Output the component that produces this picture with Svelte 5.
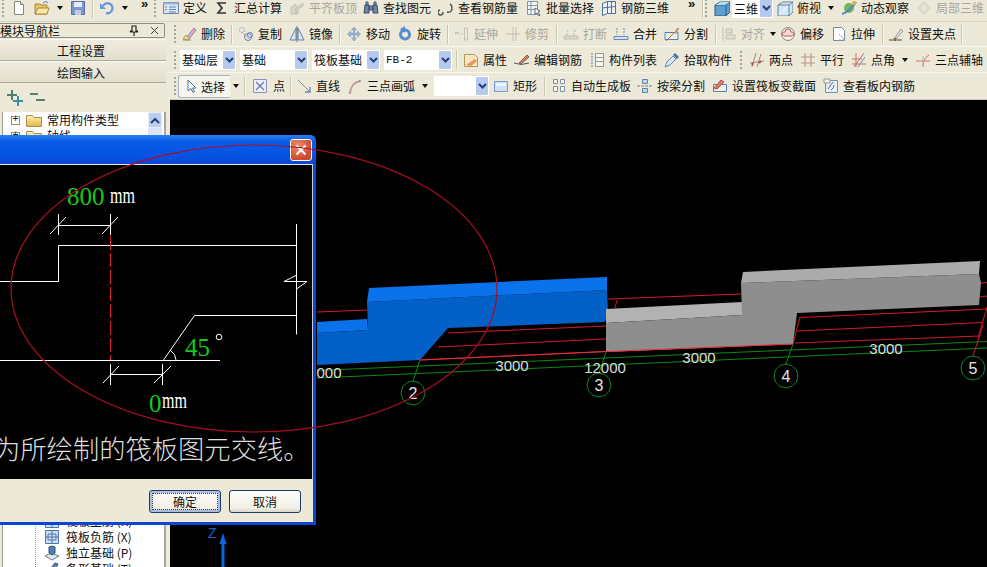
<script>
	const icons = {
		new: '<path d="M3.5 1.5h6l3 3v10h-9z" fill="#fff" stroke="#85857a"/><path d="M9.5 1.5v3h3" fill="#e4e4dc" stroke="#85857a"/>',
		open: '<path d="M1 4h5l1 1h6v9H1z" fill="#e9c665" stroke="#a5863a"/><path d="M1 14l3-6h11l-2 6z" fill="#fbe7a3" stroke="#a5863a"/><path d="M9 3q3-3 5 0" stroke="#4d86d2" fill="none"/>',
		save: '<path d="M1.5 1.5h13v13h-13z" fill="#7c97d0" stroke="#5570aa"/><path d="M4 2h8v5H4z" fill="#e8ecf6"/><path d="M5 10h6v5H5z" fill="#c3ccdb"/>',
		undo: '<path d="M4 6a5 5 0 1 1 3 7" fill="none" stroke="#6a97d8" stroke-width="2.4"/><path d="M1 3v6h6z" fill="#6a97d8"/>',
		define: '<path d="M.5 2.5h15v11H.5z" fill="#dbe6f6" stroke="#6a86ad"/><path d="M.5 2.5h15v2H.5z" fill="#9ab4da"/><path d="M6 7h7M6 9.500h7M6 12h7M2 7h2M2 9.500h2" stroke="#6a86ad"/>',
		sigma: '<path d="M12 3H4l4 5-4 5h8" fill="none" stroke="#333" stroke-width="1.700"/>',
		flush: '<path d="M2 14V7l5-3v10zM7 8l7-5v3l-5 3v5H7z" fill="#d2d0c4" stroke="#b5b3a7"/>',
		find: '<path d="M2 5h4v8H1zM10 5h4l1 8h-5zM6 6h4v4H6z" fill="#6f86a6" stroke="#3c4e6c"/><path d="M3 2h2v3H3zM11 2h2v3h-2z" fill="#9db1ce" stroke="#3c4e6c"/>',
		rebar: '<path d="M2 10a2.500 2.500 0 1 0 3 2M9 12q5 1 5-4 0-3-2-4" fill="none" stroke="#555" stroke-width="1.500"/>',
		batch: '<path d="M1.500 1.500h10v13h-10zM1.500 5.500h10M1.500 9.500h10M5 1.500v13" fill="#f6f6f0" stroke="#7f94b4"/><path d="M9 8l5 3-2 1 2 3-1 1-2-3-2 1z" fill="#fff" stroke="#666"/>',
		grid3d: '<path d="M1.500 3.500l5-2v12l-5 2zM6.500 1.500h8v12h-8zM10.500 1.500v12M1.500 8l13-1.500" fill="#eef2f9" stroke="#4f6f9f"/>',
		cube: '<path d="M1 5l5-3h10v10l-4 4H1z" fill="#5f9fd0" stroke="#2a5a84"/><path d="M1 5h11v11M12 5l4-3" fill="none" stroke="#2a5a84"/><path d="M1.500 5l5-3h9l-4 3z" fill="#b2dcf0"/>',
		cubeTop: '<path d="M1 5l5-3h10v10l-4 4H1z" fill="#d4e6f2" stroke="#5c84a2"/><path d="M1 5h11v11M12 5l4-3" fill="none" stroke="#5c84a2"/><path d="M2 15l9-9" stroke="#fff"/>',
		orbit: '<circle cx="8" cy="8" r="5" fill="#77b25e"/><path d="M1 14C5 13 12 7 15 2" fill="none" stroke="#4d8cb8" stroke-width="2"/><circle cx="13" cy="3" r="2" fill="#e8b040"/>',
		local: '<path d="M8 1l7 7-7 7-7-7z" fill="#d4d2c6"/><circle cx="8" cy="8" r="3" fill="#e9e6d8"/>',
		erase: '<path d="M2 14h8" stroke="#888"/><path d="M5 12L13 2l2 2-7 9z" fill="#d3b0cc" stroke="#9a80a0"/><path d="M2 13l3-4 3 3-1 2z" fill="#ecd98c" stroke="#a89a50"/>',
		copy: '<circle cx="4" cy="4" r="2.500" fill="none" stroke="#8ea2c0" stroke-dasharray="2 1"/><path d="M5 7l6 6" stroke="#bbb"/><circle cx="10" cy="11" r="3.500" fill="none" stroke="#6384ba"/><circle cx="12" cy="9" r="2.500" fill="none" stroke="#6384ba"/>',
		mirror: '<path d="M7 2L1 14h6zM9 2l6 12H9z" fill="#dde6f3" stroke="#6280ae"/><path d="M8 0v16" stroke="#666"/>',
		move: '<path d="M8 1l2.500 3h-2v3h3v-2L14.500 8l-3 3V9h-3v3h2L8 15l-2.500-3h2V9h-3v2L1.500 8l3-3v2h3V4h-2z" fill="#9db3d2" stroke="#7590b6" stroke-width=".5"/>',
		rotate: '<circle cx="8" cy="8.500" r="4.500" fill="none" stroke="#5a8ad2" stroke-width="3"/><path d="M8 0v7L3 3z" fill="#5a8ad2"/>',
		extend: '<path d="M1 8h8" stroke="#b5b3a8" stroke-dasharray="2 1"/><path d="M1 6.500h4M10.500 2h3v12h-3z" fill="none" stroke="#b5b3a8"/>',
		trim: '<path d="M1 8h14M8 1v14M11 1v14" stroke="#b5b3a8" fill="none"/>',
		break: '<path d="M1 13h14v-3H1zM4 10V7M11 10V7M4 4l1 2M11 3l1 3" fill="#d5d3c7" stroke="#b5b3a8"/>',
		merge: '<path d="M1 13.500h14v-3H1z" fill="#d4e2f4" stroke="#6a8bb8"/><path d="M4 2v7M11 2v7" stroke="#6a8bb8" stroke-dasharray="2 1"/>',
		split: '<path d="M1 6.500h13v7H1z" fill="#f4f0d8" stroke="#4a80d0"/><path d="M2 15L15 2" stroke="#c8604c"/><path d="M10 7l3-5 2 1-3 5z" fill="#b09a7c"/>',
		align: '<path d="M2 1v14M5 3h6v4H5zM5 9h9v4H5z" fill="#dddbd0" stroke="#b5b3a8"/>',
		offset: '<circle cx="8" cy="8" r="6.500" fill="#f4f1e6" stroke="#888"/><path d="M4 10a2 2 0 0 1 1-4 3 3 0 0 1 6 0 2 2 0 0 1 1 4z" fill="#f5d8d0" stroke="#b8645e"/>',
		stretch: '<path d="M2.500 1.500h8l3 3v10h-11z" fill="#fff" stroke="#748caa"/><path d="M8 8l6 6M8 14h6" stroke="#999" stroke-dasharray="2 1"/>',
		grips: '<path d="M1 14h4M9 14h5" stroke="#444"/><path d="M6 13L13 3l2 2-7 8z" fill="#e2e2e2" stroke="#999"/><rect x="5.500" y="12" width="3" height="3" fill="#8a6a30"/>',
		props: '<path d="M1.500 2.500h10l3 3v9h-13z" fill="#f7e7b8" stroke="#b09862"/><path d="M3 13l9-6 2 2-6 5z" fill="#ea9068"/>',
		edit: '<path d="M0 11q7 3 15 0" fill="none" stroke="#555"/><path d="M5 11l8-8 2 2-8 7z" fill="#d08060" stroke="#8a5a4a"/>',
		list: '<path d="M2 2h2M2 5h2M2 8h2M2 11h2M2 14h2" stroke="#8ba5ca" stroke-width="1.500"/><path d="M6.500 1.500h8v13h-8zM6.500 5.500h8M6.500 9.500h8" fill="#f6f6ef" stroke="#999"/>',
		pick: '<path d="M1 15l2-5 6-6 3 3-6 6z" fill="#d8e9f7" stroke="#5f8ab4"/><path d="M9 3l2-2 4 4-2 2z" fill="#4373ac"/>',
		twoPt: '<path d="M1 11l14-2M7 1l-4 14M12 2l-4 13" stroke="#9a8a7a"/><path d="M3 13l1-2M10 11l2-2" stroke="#c84040" stroke-width="2"/>',
		parallel: '<path d="M1 5h14M1 11h14M5 1v14M11 1v14" stroke="#b8908a"/>',
		angle: '<path d="M1 12h14M1 7h10M5 1v14M13 1L3 15" stroke="#c87070"/><path d="M7 15L14 5" stroke="#7a8aa8"/>',
		three: '<path d="M1 9h14M8 15q0-9 6-12" fill="none" stroke="#d87060"/><path d="M8 4v11" stroke="#a6bad0"/>',
		cursor: '<path d="M4 2v11l3-2.500 2 4 1.500-.8-2-3.700h3.500z" fill="#fff" stroke="#50709f"/>',
		point: '<path d="M1.500 1.500h13v13h-13z" fill="#eceff8" stroke="#8a90c0"/><path d="M4 4l8 8M12 4l-8 8" stroke="#7076b0" stroke-width="1.300"/>',
		line: '<path d="M2 2l12 12" stroke="#888"/><path d="M9 14h5V9" fill="none" stroke="#6080b4" stroke-width="1.300"/>',
		arc: '<path d="M3 15Q4 5 13 3" fill="none" stroke="#c4a0a0" stroke-width="2"/><path d="M2 15h2M12 3h2" stroke="#777"/>',
		rect: '<path d="M1.500 3.500h13v10h-13z" fill="#cfe0f6" stroke="#7a9aca"/><path d="M3 5h10v3H3z" fill="#eaf2fc"/>',
		auto: '<path d="M2.500 1.500h4v4h-4zM9.500 1.500h4v4h-4zM2.500 8.500h4v5h-4zM9.500 8.500h4v5h-4z" fill="#f6f6ee" stroke="#7f90a8"/>',
		beam: '<path d="M5.500 1.500h5v4h-5zM5.500 10.500h5v4h-5z" fill="#c6d8f0" stroke="#5f82b6"/><path d="M0 8h16" stroke="#5f82b6" stroke-dasharray="3 1"/>',
		section: '<path d="M1.500 6.500h13v7h-13z" fill="#f6f2e0" stroke="#4a80cc"/><path d="M2 10l7-8 3 2-7 7z" fill="#e07a6a" stroke="#b05044"/>',
		view: '<path d="M2.500 2.500h12v12h-12z" fill="#e4edf8" stroke="#7590b6"/><path d="M1 1h6v4H1z" fill="#f4f4e8" stroke="#999"/><path d="M5 11l5-7M8 12q3-2 3-5" fill="none" stroke="#668"/>',
		plus: '<path d="M4 0h2v4h4v2H6v4H4V6H0V4h4z" fill="#4e7f6c"/><path d="M10 6h2v4h4v2h-4v4h-2v-4H6v-2h4z" fill="#3c8f9c"/>',
		minus: '<path d="M0 3h8v2H0zM6 9h9v2H6z" fill="#5e7f70"/>',
		folder: '<path d="M.5 3.500h6l1.500 2h7.500v9H.5z" fill="url(#fold)" stroke="#a98d4f"/>',
		slab: '<path d="M1.500 1.500h13v13h-13zM1.500 8h13M8 1.500v13M4 5h8v6H4z" fill="#cfe0f6" stroke="#4f73ad"/>',
		foot: '<path d="M1 11l6-3 8 3-7 4z" fill="#e2e8ee" stroke="#6a7a8a"/><path d="M5 8V2l3-1 3 1v6l-3 2z" fill="#4d7fb5" stroke="#2e5686"/>',
		strip: '<path d="M2 13l9-11 3 1-6 12z" fill="#5d7fa8" stroke="#2e5686"/>'
	};

	// x is the left edge in the window, the cell width comes from the next item
	function lay(items, end) {
		return items.map((it, i) => ({
			...it,
			w: (i + 1 < items.length ? items[i + 1].x : end) - it.x
		}));
	}

	const row1 = lay([
		{ k: "grip", x: 2 },
		{ k: "icon", i: "new", x: 11 },
		{ k: "icon", i: "open", x: 34 },
		{ k: "arrow", x: 56 },
		{ k: "icon", i: "save", x: 70 },
		{ k: "sep", x: 92 },
		{ k: "icon", i: "undo", x: 99 },
		{ k: "arrow", x: 121 },
		{ k: "more", x: 138 },
		{ k: "grip", x: 154 },
		{ k: "btn", i: "define", t: "定义", x: 163 },
		{ k: "btn", i: "sigma", t: "汇总计算", x: 214 },
		{ k: "btn", i: "flush", t: "平齐板顶", x: 289, off: true },
		{ k: "btn", i: "find", t: "查找图元", x: 363 },
		{ k: "btn", i: "rebar", t: "查看钢筋量", x: 438 },
		{ k: "btn", i: "batch", t: "批量选择", x: 526 },
		{ k: "btn", i: "grid3d", t: "钢筋三维", x: 601 },
		{ k: "more", x: 685 },
		{ k: "sep", x: 702 },
		{ k: "grip", x: 705 },
		{ k: "icon", i: "cube", x: 714 },
		{ k: "combo", t: "三维", x: 732, plain: true },
		{ k: "btn", i: "cubeTop", t: "俯视", x: 777 },
		{ k: "arrow", x: 827 },
		{ k: "btn", i: "orbit", t: "动态观察", x: 841 },
		{ k: "btn", i: "local", t: "局部三维", x: 916, off: true }
	], 987);

	const row2 = lay([
		{ k: "grip", x: 174 },
		{ k: "btn", i: "erase", t: "删除", x: 181 },
		{ k: "sep", x: 231 },
		{ k: "btn", i: "copy", t: "复制", x: 238 },
		{ k: "btn", i: "mirror", t: "镜像", x: 289 },
		{ k: "sep", x: 339 },
		{ k: "btn", i: "move", t: "移动", x: 346 },
		{ k: "btn", i: "rotate", t: "旋转", x: 397 },
		{ k: "sep", x: 447 },
		{ k: "btn", i: "extend", t: "延伸", x: 454, off: true },
		{ k: "btn", i: "trim", t: "修剪", x: 505, off: true },
		{ k: "sep", x: 556 },
		{ k: "btn", i: "break", t: "打断", x: 563, off: true },
		{ k: "btn", i: "merge", t: "合并", x: 613 },
		{ k: "btn", i: "split", t: "分割", x: 664 },
		{ k: "sep", x: 715 },
		{ k: "btn", i: "align", t: "对齐", x: 721, off: true },
		{ k: "arrow", x: 769 },
		{ k: "btn", i: "offset", t: "偏移", x: 780 },
		{ k: "btn", i: "stretch", t: "拉伸", x: 831 },
		{ k: "sep", x: 882 },
		{ k: "btn", i: "grips", t: "设置夹点", x: 888 },
		{ k: "sep", x: 961 }
	], 987);

	const row3 = lay([
		{ k: "grip", x: 174 },
		{ k: "combo", t: "基础层", x: 180 },
		{ k: "combo", t: "基础", x: 240 },
		{ k: "combo", t: "筏板基础", x: 312 },
		{ k: "combo", t: "FB-2", x: 384, mono: true },
		{ k: "sep", x: 456 },
		{ k: "btn", i: "props", t: "属性", x: 463 },
		{ k: "btn", i: "edit", t: "编辑钢筋", x: 514 },
		{ k: "btn", i: "list", t: "构件列表", x: 589 },
		{ k: "btn", i: "pick", t: "拾取构件", x: 664 },
		{ k: "grip", x: 740 },
		{ k: "btn", i: "twoPt", t: "两点", x: 749 },
		{ k: "btn", i: "parallel", t: "平行", x: 800 },
		{ k: "btn", i: "angle", t: "点角", x: 851 },
		{ k: "arrow", x: 901 },
		{ k: "btn", i: "three", t: "三点辅轴", x: 915 }
	], 987);

	const row4 = lay([
		{ k: "grip", x: 174 },
		{ k: "select", i: "cursor", t: "选择", x: 178 },
		{ k: "arrow", x: 232 },
		{ k: "sep", x: 244 },
		{ k: "btn", i: "point", t: "点", x: 252, wide: true },
		{ k: "sep", x: 290 },
		{ k: "btn", i: "line", t: "直线", x: 296 },
		{ k: "btn", i: "arc", t: "三点画弧", x: 347 },
		{ k: "arrow", x: 421 },
		{ k: "combo", t: "", x: 434 },
		{ k: "btn", i: "rect", t: "矩形", x: 493 },
		{ k: "sep", x: 544 },
		{ k: "btn", i: "auto", t: "自动生成板", x: 551 },
		{ k: "btn", i: "beam", t: "按梁分割", x: 637 },
		{ k: "btn", i: "section", t: "设置筏板变截面", x: 712 },
		{ k: "btn", i: "view", t: "查看板内钢筋", x: 823 }
	], 987);

	const axes = [
		{ n: 2, x: 413, y: 393, to: [420, 360] },
		{ n: 3, x: 599, y: 385, to: [606, 352] },
		{ n: 4, x: 786, y: 376, to: [793, 344] },
		{ n: 5, x: 973, y: 368, to: [983, 325] }
	];

	const redLines = [
		"317,312 367,310", "608,299 741,294", "980,283 987,282.500", "980,297 987,296",
		"448,333 606,326", "438,347 606,339", "420,360 606,351.500", "606,351.500 793,344",
		"800,317.500 987,309", "797,331 983,322.500", "795,343 980,336", "987,307 978,338",
		"800,317 793,344", "617,300 615,308"
	];

	const dims = [
		{ t: "000", x: 329, y: 378 },
		{ t: "3000", x: 512, y: 371 },
		{ t: "12000", x: 605, y: 373 },
		{ t: "3000", x: 699, y: 363 },
		{ t: "3000", x: 886, y: 354 }
	];

	// octagon-ish bubble round the axis number
	function ring(cx, cy, r) {
		let pts = [];
		for (let a = 0; a < 12; a++) {
			let t = (a / 12) * Math.PI * 2;
			pts.push((cx + r * Math.cos(t)).toFixed(1) + "," + (cy + r * Math.sin(t)).toFixed(1));
		}
		return pts.join(" ");
	}
</script>

{#snippet icon(name)}
	<svg class="ico" viewBox="0 0 16 16" width="16" height="16">{@html icons[name]}</svg>
{/snippet}

{#snippet toolbar(items)}
	{#each items as it}
		<div class="cell" class:off={it.off} style:width={it.w + "px"}>
			{#if it.k === "grip"}
				<span class="grip"></span>
			{:else if it.k === "sep"}
				<span class="sep"></span>
			{:else if it.k === "more"}
				<span class="more">»</span>
			{:else if it.k === "arrow"}
				<span class="arrow"></span>
			{:else if it.k === "icon"}
				{@render icon(it.i)}
			{:else if it.k === "select"}
				<span class="select">{@render icon(it.i)}<span>{it.t}</span></span>
			{:else if it.k === "combo"}
				<span class="combo" class:mono={it.mono}>
					<span class="val">{it.t}</span>
					<span class="drop"><svg viewBox="0 0 9 6" width="9" height="6"><path d="M1 1l3.500 3.500L8 1" fill="none" stroke="#24407c" stroke-width="2" /></svg></span>
				</span>
			{:else}
				{@render icon(it.i)}
				<span class="lbl" class:wide={it.wide}>{it.t}</span>
			{/if}
		</div>
	{/each}
{/snippet}

{#snippet treeRow(ic, text, cls = "")}
	<div class="node {cls}">
		{@render icon(ic)}
		<span>{text}</span>
	</div>
{/snippet}

<svg width="0" height="0" class="defs">
	<defs>
		<linearGradient id="fold" x1="0" y1="0" x2="0" y2="1">
			<stop offset="0" stop-color="#fdf0b8" />
			<stop offset="1" stop-color="#e5b63f" />
		</linearGradient>
	</defs>
</svg>

<div class="app">
	<div class="bar first">{@render toolbar(row1)}</div>

	<div class="body">
		<aside class="side">
			<div class="side-title">
				<span>模块导航栏</span>
				<span class="pin">
					<svg viewBox="0 0 10 12" width="10" height="12"><path d="M3 1h4v5h1.500v1h-7V6H3zM5 7v4" fill="none" stroke="#222" stroke-width="1.200" /></svg>
					<svg viewBox="0 0 9 9" width="9" height="9"><path d="M1 1l7 7M8 1L1 8" stroke="#444" /></svg>
				</span>
			</div>
			<div class="nav-btn">工程设置</div>
			<div class="nav-btn">绘图输入</div>
			<div class="tree-tools">
				{@render icon("plus")}
				{@render icon("minus")}
			</div>
			<div class="tree">
				<div class="node top">
					<span class="box">+</span>
					{@render icon("folder")}
					<span>常用构件类型</span>
				</div>
				<div class="node top">
					<span class="box">+</span>
					{@render icon("folder")}
					<span>轴线</span>
				</div>
				<div class="hidden-rows"></div>
				<div class="leafs">
					{@render treeRow("slab", "筏板主筋 (R)")}
					{@render treeRow("slab", "筏板负筋 (X)")}
					{@render treeRow("foot", "独立基础 (P)")}
					{@render treeRow("strip", "条形基础 (T)")}
				</div>
				<div class="scroll">
					<span class="up"><svg viewBox="0 0 10 7" width="10" height="7"><path d="M1 6l4-4 4 4" fill="none" stroke="#24407c" stroke-width="2" /></svg></span>
				</div>
			</div>
		</aside>

		<main class="main">
			<div class="bar r2">{@render toolbar(row2)}</div>
			<div class="bar r3">{@render toolbar(row3)}</div>
			<div class="bar r4">{@render toolbar(row4)}</div>
			<svg class="scene" viewBox="170 100 817 467" width="817" height="467">
				{#each redLines as pts}
					<polyline points={pts} fill="none" stroke="#d8182c" stroke-width="1" />
				{/each}
				<polygon points="317,322 367,319 368,330 317,333" fill="#0a72ea" />
				<polygon points="367,302 607,290 608,310 605,322 448,328 420,360 317,365 317,333 368,330" fill="#0360c6" />
				<polygon points="369,288 607,277 607,290 367,302" fill="#0a72ea" />
				<polygon points="606,309 742,302 742,315 606,323" fill="#b2b2b2" />
				<polygon points="741,283 979,274 981,283 979,305 797,313 793,344 606,352 606,323 742,315" fill="#8e8e8e" />
				<polygon points="743,272 980,261 979,274 741,283" fill="#ababab" />
				<polyline points="420,360 606,351.500 793,344" fill="none" stroke="#e8303c" stroke-width="1" />
				<line x1="317" y1="370.500" x2="987" y2="341.500" stroke="#0b8a14" />
				<line x1="317" y1="378" x2="987" y2="348" stroke="#0b8a14" />
				{#each axes as a}
					<line x1={a.x} y1={a.y - 12} x2={a.to[0]} y2={a.to[1]} stroke={a.n === 5 ? "#d8182c" : "#0b8a14"} />
					<polygon points={ring(a.x, a.y, 12)} fill="#000" stroke="#0a8a30" />
					<text class="bubble" x={a.x} y={a.y + 6}>{a.n}</text>
				{/each}
				{#each dims as d}
					<text class="dim" x={d.x} y={d.y}>{d.t}</text>
				{/each}
				<text class="z" x="208" y="538">Z</text>
				<path d="M223 533l3.500 11h-2v23h-3v-23h-2z" fill="#0a66e0" />
			</svg>
		</main>
	</div>

	<div class="dialog">
		<div class="dlg-title">
			<span class="close">
				<svg viewBox="0 0 12 12" width="12" height="12"><path d="M1.500 1.500l9 9M10.500 1.500l-9 9" stroke="#fff" stroke-width="2" /></svg>
			</span>
		</div>
		<div class="dlg-body">
			<svg viewBox="0 165 312 314" width="312" height="314">
				<g fill="none" stroke="#fff" stroke-width="1">
					<path d="M0 281.500H58.500V245.500H296.500" />
					<path d="M296.500 224V334.500" />
					<path d="M296 275.500L284 281.500H307L296.500 289" />
					<path d="M296.500 315.500H194.500L163.500 360" />
					<path d="M0 360.500H220" />
					<path d="M170 350Q176 354 176 360" />
					<path d="M58.500 214V235M110.500 214V235M58.500 225.500H110.500M50 234L66 217M102 234L118 217" />
					<path d="M110.500 364V385M162.500 364V385M110.500 374.500H162.500M103 383L119 366M154 383L171 366" />
				</g>
				<path d="M110.500 236V360" stroke="#d8222c" stroke-dasharray="14 3" />
				<text class="num" x="67" y="205">800</text>
				<text class="unit" x="110" y="203" textLength="25" lengthAdjust="spacingAndGlyphs">mm</text>
				<text class="num" x="185" y="356">45</text>
				<circle cx="219" cy="337" r="2.800" fill="none" stroke="#fff" />
				<text class="num" x="149" y="412">0</text>
				<text class="unit" x="162" y="408" textLength="25" lengthAdjust="spacingAndGlyphs">mm</text>
				<text class="msg" x="-6" y="459">为所绘制的筏板图元交线。</text>
			</svg>
		</div>
		<div class="dlg-foot">
			<button class="primary"><span>确定</span></button>
			<button><span>取消</span></button>
		</div>
	</div>

	<svg class="mark" viewBox="0 0 987 567" width="987" height="567">
		<ellipse cx="254" cy="288.500" rx="243" ry="143.500" fill="none" stroke="#a80f22" stroke-width="1.200" />
	</svg>
</div>

<style>
	:global(body) {
		margin: 0;
		background: #000;
	}

	.defs {
		position: absolute;
	}

	.app {
		position: relative;
		width: 987px;
		height: 567px;
		overflow: hidden;
		background: #ece9d8;
		font-family: "Noto Sans CJK SC", "Liberation Sans", sans-serif;
		font-size: 12px;
		color: #111;
	}

	.bar {
		display: flex;
		align-items: center;
		background: #ece9d8;
		box-sizing: border-box;
	}

	.first {
		height: 22px;
		padding: 0 0 5px 2px;
		border-bottom: 1px solid #d8d5c4;
	}

	.r2 {
		height: 25px;
		padding-left: 4px;
		border-bottom: 1px solid #f7f6ef;
	}

	.r3 {
		height: 26px;
		padding-left: 4px;
		border-bottom: 1px solid #f7f6ef;
	}

	.r4 {
		height: 27px;
		padding-left: 4px;
		border-bottom: 1px solid #cfccbb;
	}

	.cell {
		display: flex;
		align-items: center;
		flex: none;
		height: 20px;
		white-space: nowrap;
	}

	.off {
		color: #a9a79c;
	}

	.off .ico {
		opacity: 0.75;
	}

	.lbl {
		margin-left: 4px;
		line-height: 16px;
	}

	.lbl.wide {
		margin-left: 5px;
	}

	.ico {
		flex: none;
	}

	.grip {
		height: 18px;
		border-left: 2px dotted #a8a698;
	}

	.sep {
		height: 19px;
		border-left: 1px solid #c9c6b4;
		box-shadow: 1px 0 0 #f8f7f0;
	}

	.more {
		font: bold 13px/8px "Liberation Sans", sans-serif;
		margin: -8px 0 0 3px;
	}

	.arrow {
		margin-left: 1px;
		border: 3px solid transparent;
		border-top: 4px solid #111;
		border-bottom: 0;
	}

	.select {
		display: flex;
		align-items: center;
		gap: 1px;
		box-sizing: border-box;
		width: 52px;
		height: 23px;
		padding-left: 5px;
		background: #f6f5ee;
		border: 1px solid #a9b3c8;
		border-right: 0;
		border-radius: 3px 0 0 3px;
	}

	.combo {
		display: flex;
		align-items: center;
		justify-content: space-between;
		box-sizing: border-box;
		width: calc(100% - 4px);
		height: 20px;
		background: #fff;
		padding: 1px 1px 1px 2px;
	}

	.combo.mono .val {
		font: 11px "Liberation Mono", monospace;
	}

	.drop {
		display: flex;
		align-items: center;
		justify-content: center;
		width: 12px;
		height: 18px;
		background: #b7caee;
		border-radius: 1px;
	}

	.body {
		display: flex;
		height: 545px;
	}

	.side {
		display: flex;
		flex-direction: column;
		flex: none;
		width: 170px;
		box-sizing: border-box;
		padding-right: 3px;
		background: #ece9d8;
	}

	.side-title {
		display: flex;
		justify-content: space-between;
		align-items: center;
		box-sizing: border-box;
		height: 15px;
		margin: 1px 2px 1px 0;
		border: 1px solid #8f8d80;
		border-left: 0;
		border-radius: 0 2px 2px 0;
		line-height: 13px;
	}

	.pin {
		display: flex;
		align-items: center;
		gap: 11px;
		padding-right: 5px;
	}

	.nav-btn {
		display: flex;
		align-items: center;
		justify-content: center;
		height: 22px;
		margin-right: 1px;
		background: linear-gradient(#efecdf, #e3dfcd);
		border-top: 1px solid #fbfaf4;
		border-bottom: 1px solid #aca899;
		box-sizing: border-box;
		padding-right: 4px;
	}

	.tree-tools {
		display: flex;
		align-items: center;
		gap: 7px;
		height: 29px;
		padding: 0 0 0 7px;
		box-sizing: border-box;
	}

	.tree {
		position: relative;
		flex: 1;
		margin: 0 1px 0 2px;
		background: #fff;
		border-left: 1px solid #9d9b8e;
		border-right: 2px solid #a9a79a;
		overflow: hidden;
	}

	.node {
		display: flex;
		align-items: center;
		gap: 6px;
		height: 16px;
		line-height: 16px;
		padding-left: 40px;
		white-space: nowrap;
	}

	.node.top {
		padding-left: 8px;
		gap: 2px;
	}

	.node.top > span:last-child {
		margin-left: 3px;
	}

	.box {
		display: flex;
		align-items: center;
		justify-content: center;
		box-sizing: border-box;
		width: 9px;
		height: 9px;
		margin-right: 4px;
		border: 1px solid #8d8d80;
		font: 10px/8px "Liberation Mono", monospace;
	}

	.hidden-rows {
		height: 369px;
	}

	.leafs {
		border-left: 1px dotted #999;
		margin-left: 32px;
	}

	.leafs .node {
		padding-left: 8px;
		background: #fff;
	}

	.scroll {
		position: absolute;
		top: 0;
		right: 2px;
		width: 14px;
		height: 40px;
		background: #dbe5f8;
	}

	.up {
		display: flex;
		align-items: center;
		justify-content: center;
		height: 16px;
		background: #bccdf0;
		border: 1px solid #e6edfb;
		box-sizing: border-box;
	}

	.main {
		flex: 1;
		min-width: 0;
		background: #000;
	}

	.scene {
		display: block;
		background: #000;
	}

	.bubble {
		fill: #e6e6e6;
		font: 16px "Liberation Sans", sans-serif;
		text-anchor: middle;
	}

	.dim {
		fill: #dcdcdc;
		font: 15px "Liberation Sans", sans-serif;
		text-anchor: middle;
	}

	.z {
		fill: #1f62c8;
		font: 14px "Liberation Sans", sans-serif;
	}

	.dialog {
		position: absolute;
		left: 0;
		top: 135px;
		width: 316px;
		height: 390px;
		display: flex;
		flex-direction: column;
		background: #0a46d4;
		border-radius: 0 6px 0 0;
		box-sizing: border-box;
		padding: 0 3px 3px 0;
	}

	.dlg-title {
		display: flex;
		justify-content: flex-end;
		align-items: center;
		flex: none;
		height: 29px;
		margin-right: -3px;
		padding-right: 4px;
		box-sizing: border-box;
		background: linear-gradient(#2d7ff2, #0a5ce8 22%, #0552e4 70%, #0a48d2);
		border-radius: 0 6px 0 0;
	}

	.close {
		display: flex;
		align-items: center;
		justify-content: center;
		width: 20px;
		height: 20px;
		background: radial-gradient(circle at 35% 30%, #eb9070, #cf4a2c 70%);
		border: 1px solid #fff;
		border-radius: 3px;
	}

	.dlg-body {
		flex: none;
		height: 315px;
		background: #000;
		border-top: 1px solid #e8e8e8;
		border-right: 1px solid #cfcfcf;
		box-sizing: border-box;
	}

	.dlg-body svg {
		display: block;
	}

	.num {
		fill: #16c81c;
		font: 25px "Liberation Serif", serif;
	}

	.unit {
		fill: #fff;
		font: 23px "Liberation Serif", serif;
	}

	.msg {
		fill: #dedede;
		font-family: "Noto Sans CJK SC", sans-serif;
		font-weight: 300;
		font-size: 26.300px;
	}

	.dlg-foot {
		display: flex;
		justify-content: flex-end;
		align-items: flex-start;
		flex: 1;
		gap: 8px;
		padding: 11px 12px 0 0;
		background: #ece9d8;
	}

	button {
		width: 72px;
		height: 23px;
		padding: 0;
		font: inherit;
		color: #111;
		background: linear-gradient(#fdfdfa, #f2f0e6 80%, #dcd8c8);
		border: 1px solid #1c3a64;
		border-radius: 3px;
	}

	button.primary {
		box-shadow: inset 0 0 0 2px #a9bce4;
	}

	button.primary span {
		display: block;
		margin: 2px;
		outline: 1px dotted #333;
		outline-offset: -1px;
		line-height: 17px;
	}

	.mark {
		position: absolute;
		left: 0;
		top: 0;
		pointer-events: none;
	}
</style>
